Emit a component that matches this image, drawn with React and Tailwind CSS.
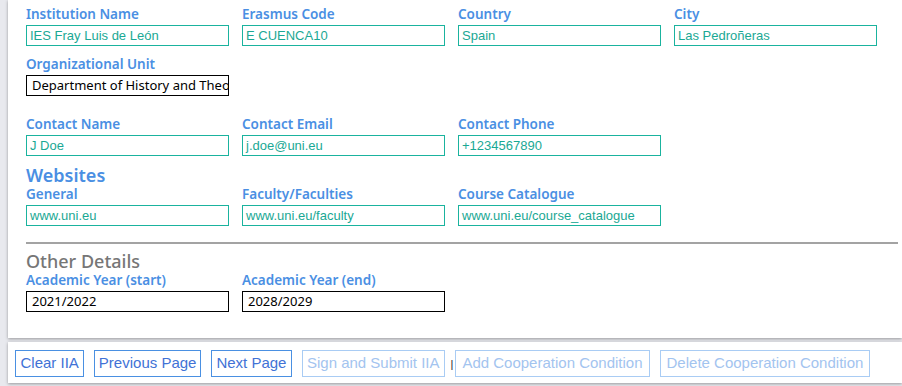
import React from 'react';

const label = "block text-[13.5px] leading-[17px] font-semibold text-[#4a8fe3] font-['Noto_Sans',sans-serif]";
const tealInput = "h-[21px] border border-[#1ab39e] px-[3px] text-[13px] leading-[19px] text-[#1aa894] font-['Liberation_Sans',Arial,sans-serif] whitespace-nowrap overflow-hidden";
const darkInput = "h-[21px] border border-black pl-[5px] text-[13px] leading-[19px] text-black font-['Noto_Sans',sans-serif] whitespace-nowrap overflow-hidden";

const Field = ({ name, value, dark }) => (
  <div className="w-[203px]">
    <span className={label}>{name}</span>
    <div className={`mt-[2px] ${dark ? darkInput : tealInput}`}>{value}</div>
  </div>
);

const Row = ({ children, className = '' }) => (
  <div className={`flex gap-[13px] ${className}`}>{children}</div>
);

const Button = ({ children, disabled, className = 'px-[6px]' }) => (
  <button
    className={`h-[27px] border text-[15px] font-['Liberation_Sans',Arial,sans-serif] bg-white ${className} ${
      disabled ? 'border-[#a9ccf4] text-[#a3c4ef]' : 'border-[#4a90e2] text-[#4172d6]'
    }`}
  >
    {children}
  </button>
);

export default function App() {
  return (
    <div className="w-[902px] h-[386px] bg-[#e8e9ee] pl-2 overflow-hidden flex flex-col">
      {/* Form card */}
      <div className="bg-white h-[338px] pl-[18px] pt-[6px] shadow-[0_1px_3px_rgba(0,0,0,0.35)]">
        <Row>
          <Field name="Institution Name" value="IES Fray Luis de León" />
          <Field name="Erasmus Code" value="E CUENCA10" />
          <Field name="Country" value="Spain" />
          <Field name="City" value="Las Pedroñeras" />
        </Row>
        <Row className="mt-[10px]">
          <Field name="Organizational Unit" value="Department of History and Theology" dark />
        </Row>
        <Row className="mt-[20px]">
          <Field name="Contact Name" value="J Doe" />
          <Field name="Contact Email" value="j.doe@uni.eu" />
          <Field name="Contact Phone" value="+1234567890" />
        </Row>
        <h2 className="mt-[10px] text-[18px] leading-[18px] font-semibold text-[#4a8fe3] font-['Noto_Sans',sans-serif]">
          Websites
        </h2>
        <Row className="mt-[2px]">
          <Field name="General" value="www.uni.eu" />
          <Field name="Faculty/Faculties" value="www.uni.eu/faculty" />
          <Field name="Course Catalogue" value="www.uni.eu/course_catalogue" />
        </Row>
        <hr className="mt-[16px] mr-[4px] border-0 h-[2px] bg-[#a3a3a3]" />
        <h2 className="mt-[6px] text-[18px] leading-[22px] font-medium text-[#767676] font-['Noto_Sans',sans-serif]">
          Other Details
        </h2>
        <Row>
          <Field name="Academic Year (start)" value="2021/2022" dark />
          <Field name="Academic Year (end)" value="2028/2029" dark />
        </Row>
      </div>

      {/* Action bar */}
      <div className="mt-[4px] h-[41px] bg-white pl-[7px] pt-[8px] flex items-start gap-[10px] shadow-[0_1px_3px_rgba(0,0,0,0.35)]">
        <Button className="px-[4.5px]">Clear IIA</Button>
        <Button className="px-[3.5px]">Previous Page</Button>
        <Button className="px-[4.5px]">Next Page</Button>
        <Button disabled className="px-[4px]">Sign and Submit IIA</Button>
        <span className="-ml-[4px] -mr-[8px] mt-[8px] text-[11px] leading-[12px] text-[#1a1a2e] font-['Liberation_Sans',Arial,sans-serif]">|</span>
        <Button disabled>Add Cooperation Condition</Button>
        <Button disabled>Delete Cooperation Condition</Button>
      </div>
    </div>
  );
}
